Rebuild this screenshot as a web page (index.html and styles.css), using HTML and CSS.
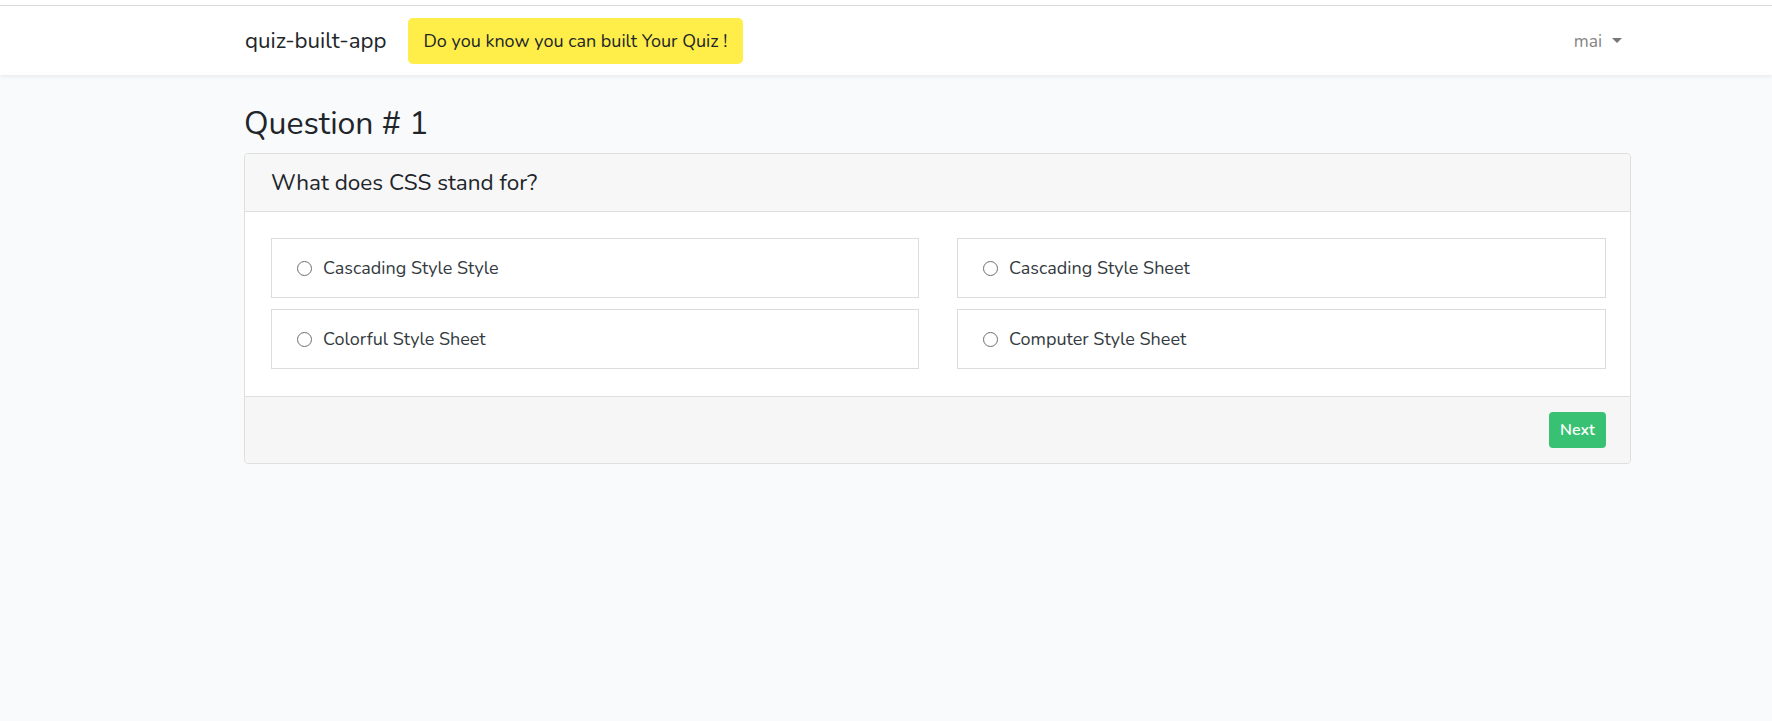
FILE: index.html
```html
<!DOCTYPE html>
<html>
<head>
<meta charset="utf-8">
<link rel="stylesheet" href="styles.css">
</head>
<body>
<div class="topstrip"></div>
<nav class="navbar">
  <div class="nav-inner">
    <a class="brand">quiz-built-app</a>
    <span class="promo">Do you know you can built Your Quiz !</span>
    <div class="spacer"></div>
    <a class="user">mai <span class="caret"></span></a>
  </div>
</nav>
<main class="content">
  <h2 class="title">Question # 1</h2>
  <div class="card">
    <div class="card-header">What does CSS stand for?</div>
    <div class="card-body">
      <label class="option"><span class="radio"></span><span>Cascading Style Style</span></label>
      <label class="option"><span class="radio"></span><span>Cascading Style Sheet</span></label>
      <label class="option"><span class="radio"></span><span>Colorful Style Sheet</span></label>
      <label class="option"><span class="radio"></span><span>Computer Style Sheet</span></label>
    </div>
    <div class="card-footer">
      <button class="btn-next">Next</button>
    </div>
  </div>
</main>
</body>
</html>
```
FILE: styles.css
```css
* { box-sizing: border-box; }
html, body { margin: 0; padding: 0; }
body {
  background: #f8fafc;
  font-family: "Nunito", "Lato", "Open Sans", sans-serif;
  color: #212529;
  height: 721px;
  overflow: hidden;
}
.topstrip {
  height: 6px;
  background: #fff;
  border-bottom: 1px solid #dcdcdc;
}
.navbar {
  background: #fff;
  height: 69px;
  box-shadow: 0 2px 4px rgba(0,0,0,0.06);
  position: relative;
}
.nav-inner {
  display: flex;
  align-items: center;
  height: 100%;
  margin-left: 245px;
  width: 1377px;
}
.brand {
  font-size: 22.3px;
  color: #212529;
  margin-right: 21px;
}
.promo {
  background: #ffed4a;
  border-radius: 5px;
  height: 46px;
  display: flex;
  align-items: center;
  padding: 0 16px;
  font-size: 18px;
  color: #212529;
}
.spacer { flex: 1; }
.user {
  color: #858585;
  font-size: 17.5px;
  display: flex;
  align-items: center;
}
.caret {
  display: inline-block;
  margin-left: 10px;
  border-top: 5px solid #777;
  border-left: 5px solid transparent;
  border-right: 5px solid transparent;
  width: 0;
  height: 0;
}
.content {
  margin-left: 244px;
  width: 1387px;
  padding-top: 30px;
}
.title {
  font-size: 32px;
  font-weight: 400;
  margin: 0 0 10px 0;
  line-height: 38px;
}
.card {
  background: #fff;
  border: 1px solid #dfdfdf;
  border-radius: 4px;
}
.card-header {
  background: #f7f7f7;
  border-bottom: 1px solid #dfdfdf;
  height: 58px;
  display: flex;
  align-items: center;
  padding-left: 26px;
  font-size: 22.5px;
  border-radius: 4px 4px 0 0;
}
.card-body {
  display: grid;
  grid-template-columns: 648px 649px;
  column-gap: 38px;
  row-gap: 11px;
  padding: 26px 25px 27px 26px;
}
.option {
  height: 60px;
  border: 1px solid #dcdcdc;
  display: flex;
  align-items: center;
  padding-left: 25px;
  font-size: 18px;
  color: #343a40;
}
.radio {
  width: 15px;
  height: 15px;
  border: 1px solid #6f6f6f;
  border-radius: 50%;
  margin-right: 11px;
  flex: none;
}
.card-footer {
  background: #f6f6f6;
  border-top: 1px solid #dfdfdf;
  height: 67px;
  display: flex;
  align-items: center;
  justify-content: flex-end;
  padding-right: 24px;
  border-radius: 0 0 4px 4px;
}
.btn-next {
  background: #38c172;
  border: none;
  color: #fff;
  font-family: inherit;
  font-size: 16px;
  font-weight: 600;
  height: 36px;
  width: 57px;
  border-radius: 4px;
  padding: 0;
}
```
